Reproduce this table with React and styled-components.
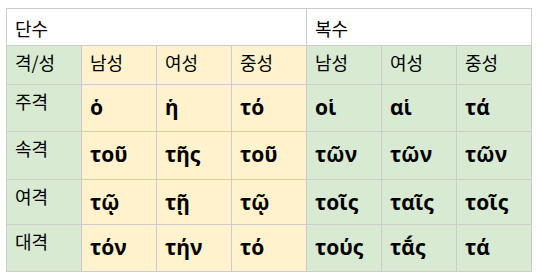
import React from "react";
import styled, { createGlobalStyle } from "styled-components";

const Global = createGlobalStyle`
  html, body { margin: 0; padding: 0; background: #fff; }
  body { padding: 8px 0 0 6px; }
`;

const Grid = styled.div`
  display: grid;
  grid-template-columns: repeat(7, 74px);
  grid-template-rows: 36px 38px 46px 47px 44px 46px;
  gap: 1px;
  padding: 1px;
  width: max-content;
  background: #cccccc;
`;

const bgs = { white: "#ffffff", green: "#d9ead3", yellow: "#fff2cc" };

const Cell = styled.div`
  grid-column: span ${(p) => p.$span || 1};
  background: ${(p) => bgs[p.$bg]};
  padding: ${(p) => (p.$greek ? "10px 0 0 8px" : "4px 0 0 8px")};
  font-family: ${(p) =>
    p.$greek
      ? '"Open Sans", "Noto Sans", sans-serif'
      : '"Noto Sans CJK KR", "Noto Sans", sans-serif'};
  font-size: ${(p) => (p.$greek ? "21px" : "18px")};
  font-weight: ${(p) => (p.$greek ? 700 : 400)};
  line-height: 24px;
  color: #000;
  white-space: nowrap;
  display: flex;
  align-items: ${(p) => (p.$center ? "center" : "flex-start")};
  ${(p) => (p.$center ? "padding-top: 2px;" : "")}
`;

const rows = [
  ["주격", ["ὁ", "ἡ", "τό"], ["οἱ", "αἱ", "τά"]],
  ["속격", ["τοῦ", "τῆς", "τοῦ"], ["τῶν", "τῶν", "τῶν"]],
  ["여격", ["τῷ", "τῇ", "τῷ"], ["τοῖς", "ταῖς", "τοῖς"]],
  ["대격", ["τόν", "τήν", "τό"], ["τούς", "τᾱ́ς", "τά"]],
];

export default function App() {
  return (
    <>
      <Global />
      <Grid>
        <Cell $span={4} $bg="white" $center>단수</Cell>
        <Cell $span={3} $bg="white" $center>복수</Cell>
        <Cell $bg="green">격/성</Cell>
        {["남성", "여성", "중성"].map((g, i) => (
          <Cell key={"s" + i} $bg="yellow">{g}</Cell>
        ))}
        {["남성", "여성", "중성"].map((g, i) => (
          <Cell key={"p" + i} $bg="green">{g}</Cell>
        ))}
        {rows.map(([label, sg, pl]) => (
          <React.Fragment key={label}>
            <Cell $bg="green">{label}</Cell>
            {sg.map((w, i) => (
              <Cell key={"s" + i} $bg="yellow" $greek>{w}</Cell>
            ))}
            {pl.map((w, i) => (
              <Cell key={"p" + i} $bg="green" $greek>{w}</Cell>
            ))}
          </React.Fragment>
        ))}
      </Grid>
    </>
  );
}
